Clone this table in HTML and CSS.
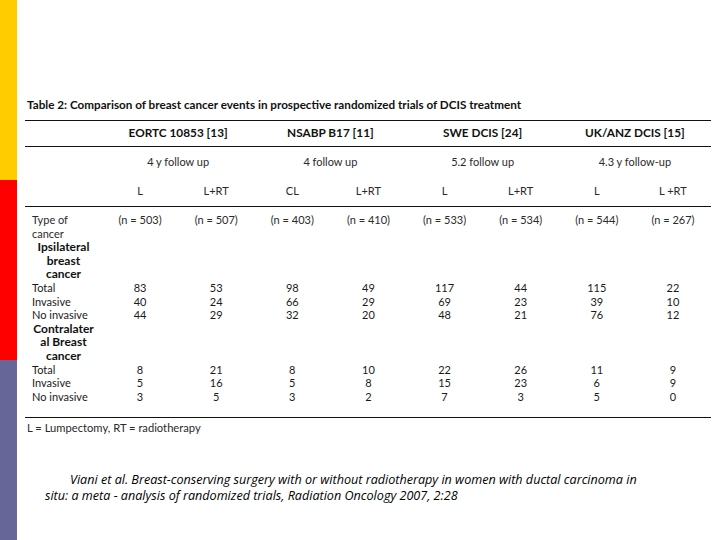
FILE: index.html
```html
<!DOCTYPE html>
<html>
<head>
<meta charset="utf-8">
<link rel="stylesheet" href="styles.css">
</head>
<body>
<div class="slide">
  <div class="bar"><div class="seg yellow"></div><div class="seg red"></div><div class="seg purple"></div></div>
  <div class="main">
    <div class="caption">Table 2: Comparison of breast cancer events in prospective randomized trials of DCIS treatment</div>
    <table class="data">
      <colgroup><col class="c0"><col><col><col><col><col><col><col><col></colgroup>
      <thead>
        <tr class="hr1"><th></th><th colspan="2">EORTC 10853 [13]</th><th colspan="2">NSABP B17 [11]</th><th colspan="2">SWE DCIS [24]</th><th colspan="2">UK/ANZ DCIS [15]</th></tr>
        <tr class="hr2"><td></td><td colspan="2">4 y follow up</td><td colspan="2">4 follow up</td><td colspan="2">5.2 follow up</td><td colspan="2">4.3 y follow-up</td></tr>
        <tr class="hr3"><td></td><td>L</td><td>L+RT</td><td>CL</td><td>L+RT</td><td>L</td><td>L+RT</td><td>L</td><td>L +RT</td></tr>
      </thead>
      <tbody>
        <tr class="first"><td class="lab">Type of<br>cancer</td><td>(n = 503)</td><td>(n = 507)</td><td>(n = 403)</td><td>(n = 410)</td><td>(n = 533)</td><td>(n = 534)</td><td>(n = 544)</td><td>(n = 267)</td></tr>
        <tr><td class="grp">Ipsilateral<br>breast<br>cancer</td><td></td><td></td><td></td><td></td><td></td><td></td><td></td><td></td></tr>
        <tr class="num"><td class="lab">Total</td><td>83</td><td>53</td><td>98</td><td>49</td><td>117</td><td>44</td><td>115</td><td>22</td></tr>
        <tr class="num"><td class="lab">Invasive</td><td>40</td><td>24</td><td>66</td><td>29</td><td>69</td><td>23</td><td>39</td><td>10</td></tr>
        <tr class="num"><td class="lab">No invasive</td><td>44</td><td>29</td><td>32</td><td>20</td><td>48</td><td>21</td><td>76</td><td>12</td></tr>
        <tr><td class="grp">Contralater<br>al Breast<br>cancer</td><td></td><td></td><td></td><td></td><td></td><td></td><td></td><td></td></tr>
        <tr class="num"><td class="lab">Total</td><td>8</td><td>21</td><td>8</td><td>10</td><td>22</td><td>26</td><td>11</td><td>9</td></tr>
        <tr class="num"><td class="lab">Invasive</td><td>5</td><td>16</td><td>5</td><td>8</td><td>15</td><td>23</td><td>6</td><td>9</td></tr>
        <tr class="num last"><td class="lab">No invasive</td><td>3</td><td>5</td><td>3</td><td>2</td><td>7</td><td>3</td><td>5</td><td>0</td></tr>
      </tbody>
    </table>
    <div class="foot">L = Lumpectomy, RT = radiotherapy</div>
    <p class="cite">Viani et al. Breast-conserving surgery with or without radiotherapy in women with ductal carcinoma in<br>situ: a meta - analysis of randomized trials, Radiation Oncology 2007, 2:28</p>
  </div>
</div>
</body>
</html>
```

FILE: styles.css
```css
html, body {
  margin: 0;
  padding: 0;
  background: #fff;
}
.slide {
  width: 720px;
  height: 540px;
  display: flex;
  overflow: hidden;
}
.bar {
  width: 17px;
  flex: none;
  display: flex;
  flex-direction: column;
}
.seg { height: 180px; }
.yellow { background: #ffcc00; }
.red { background: #ff0000; }
.purple { background: #666699; }
.main {
  flex: 1;
  padding: 97px 9px 0 8px;
  font-family: Lato, "Open Sans", sans-serif;
  color: #2a2a2a;
}
.caption {
  font-weight: 700;
  font-size: 11.7px;
  line-height: 14px;
  color: #111;
  padding-left: 2px;
  height: 23px;
  white-space: nowrap;
}
.data {
  width: 686px;
  border-collapse: collapse;
  table-layout: fixed;
  font-size: 11px;
}
.data col.c0 { width: 77px; }
.data td, .data th {
  padding: 0;
  text-align: center;
  vertical-align: top;
  white-space: nowrap;
}
.hr1 th {
  border-top: 1px solid #111;
  border-bottom: 1px solid #111;
  height: 22px;
  vertical-align: middle;
  font-size: 11.8px;
  font-weight: 700;
  color: #111;
  padding-bottom: 3px;
}
.hr2 td {
  height: 28px;
  vertical-align: middle;
}
.hr3 td {
  height: 30px;
  vertical-align: middle;
  border-bottom: 1px solid #111;
  padding-bottom: 1px;
}
tbody td {
  line-height: 13.6px;
}
tbody tr.first td { padding-top: 6px; }
tbody tr.last td { padding-bottom: 14px; border-bottom: 1px solid #111; }
td.lab {
  text-align: left;
  padding-left: 7px;
}
td.grp {
  font-weight: 700;
  font-size: 12px;
  color: #111;
}
tr.num td { color: #1a1a1a; }
.foot {
  font-size: 11.2px;
  line-height: 14px;
  padding: 3px 0 0 2px;
}
.cite {
  margin: 37px 0 0 20px;
  font-family: "Open Sans", sans-serif;
  font-style: italic;
  font-size: 12.6px;
  line-height: 16px;
  color: #000;
  text-indent: 25px;
  white-space: nowrap;
}
```
